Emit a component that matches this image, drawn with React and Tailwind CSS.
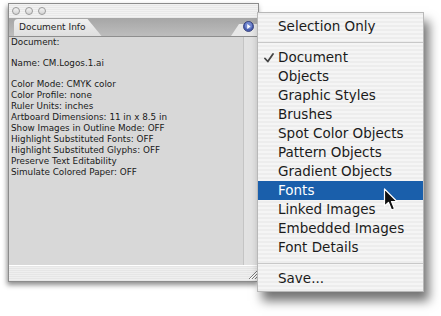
const infoLines = [
  'Document:',
  '',
  'Name: CM.Logos.1.ai',
  '',
  'Color Mode: CMYK color',
  'Color Profile: none',
  'Ruler Units: inches',
  'Artboard Dimensions: 11 in x 8.5 in',
  'Show Images in Outline Mode: OFF',
  'Highlight Substituted Fonts: OFF',
  'Highlight Substituted Glyphs: OFF',
  'Preserve Text Editability',
  'Simulate Colored Paper: OFF',
];

const menuGroups = [
  [{ label: 'Selection Only' }],
  [
    { label: 'Document', checked: true },
    { label: 'Objects' },
    { label: 'Graphic Styles' },
    { label: 'Brushes' },
    { label: 'Spot Color Objects' },
    { label: 'Pattern Objects' },
    { label: 'Gradient Objects' },
    { label: 'Fonts', active: true },
    { label: 'Linked Images' },
    { label: 'Embedded Images' },
    { label: 'Font Details' },
  ],
  [{ label: 'Save...' }],
];

function TrafficDot() {
  return <div className="w-[8px] h-[8px] rounded-full border border-[#9a9a9a] bg-gradient-to-b from-[#f4f4f4] to-[#d4d4d4]" />;
}

function MenuItem({ item }) {
  return (
    <div
      className={`relative h-[19px] flex items-center pl-[20px] ${
        item.active ? 'bg-[#1a5fab] text-white' : 'text-[#1b1b1b]'
      }`}
    >
      {item.checked && (
        <svg className="absolute left-[6px] top-[5px]" width="10" height="10" viewBox="0 0 10 10">
          <path d="M1 5.5 L3.8 8.5 L9 1" fill="none" stroke="#444" strokeWidth="1.8" strokeLinecap="round" strokeLinejoin="round" />
        </svg>
      )}
      {item.label}
    </div>
  );
}

export default function App() {
  return (
    <div className="relative w-[441px] h-[316px] bg-white overflow-hidden" style={{ fontFamily: '"DejaVu Sans", sans-serif' }}>
      {/* Document Info palette */}
      <div className="absolute left-[8px] top-[3px] w-[251px] h-[279px] flex flex-col border border-[#8c8c8c] bg-[#d8d8d8] shadow-[-1px_3px_5px_rgba(0,0,0,0.45)]">
        {/* title bar */}
        <div className="h-[14px] flex items-center gap-[5px] pl-[3px] bg-[repeating-linear-gradient(0deg,#e9e9e9_0px,#e9e9e9_1px,#f2f2f2_1px,#f2f2f2_2px)]">
          <TrafficDot />
          <TrafficDot />
          <TrafficDot />
        </div>

        {/* tab row */}
        <div className="relative h-[19px] flex items-end bg-gradient-to-b from-[#a6a6a6] to-[#bdbdbd] border-b border-[#8e8e8e]">
          <div className="ml-[5px] h-[17px] pl-[5px] pr-[16px] flex items-center bg-gradient-to-b from-[#f0f0f0] to-[#dedede] rounded-tl-[4px] [clip-path:polygon(0_0,calc(100%-14px)_0,100%_100%,0_100%)] text-[9px] text-[#1e1e1e]">
            Document Info
          </div>
          <div className="ml-auto mr-[-1px] h-[12px] w-[28px] bg-[#e8e8e8] [clip-path:polygon(8px_0,100%_0,100%_100%,0_100%)]" />
          <svg className="absolute right-[4px] top-[3px]" width="11" height="11" viewBox="0 0 11 11">
            <circle cx="5.5" cy="5.5" r="5" fill="#4a5fb0" stroke="#2a3470" strokeWidth="0.8" />
            <circle cx="5.5" cy="4.5" r="3.5" fill="#8fa3e6" opacity="0.6" />
            <path d="M4.2 3 L7.6 5.5 L4.2 8 Z" fill="#fff" />
          </svg>
        </div>

        {/* info text */}
        <div className="flex-1 flex">
          <div className="flex-1 pl-[2px] text-[8.8px] leading-[11px] text-[#1a1a1a] border-r border-[#c4c4c4]">
            {infoLines.map((line, i) =>
              line ? <div key={i}>{line}</div> : <div key={i} className="h-[10px]" />
            )}
          </div>
          <div className="w-[14px] bg-[#e2e2e2]" />
        </div>

        {/* footer */}
        <div className="h-[16px] flex justify-end items-end border-t border-white bg-[repeating-linear-gradient(0deg,#e6e6e6_0px,#e6e6e6_1px,#efefef_1px,#efefef_2px)]">
          <svg width="12" height="12" viewBox="0 0 12 12" className="mb-[1px]">
            <path d="M11 3 L3 11 M11 6 L6 11 M11 9 L9 11" stroke="#7a7a7a" strokeWidth="1" />
            <path d="M11 4 L4 11 M11 7 L7 11" stroke="#ffffff" strokeWidth="1" />
          </svg>
        </div>
      </div>

      {/* flyout menu */}
      <div className="absolute left-[257px] top-[12px] w-[167px] flex flex-col pt-[4px] pb-[3px] border border-[#b8b8b8] bg-[repeating-linear-gradient(0deg,#ededed_0px,#ededed_2px,#f5f5f5_2px,#f5f5f5_4px)] shadow-[5px_9px_10px_rgba(0,0,0,0.55)] text-[13.5px]">
        {menuGroups.map((group, gi) => (
          <div key={gi}>
            {gi > 0 && (
              <div className="h-[12px] flex items-center">
                <div className="w-full h-px bg-[#c8c8c8]" />
              </div>
            )}
            {group.map((item) => (
              <MenuItem key={item.label} item={item} />
            ))}
          </div>
        ))}
      </div>

      {/* mouse pointer */}
      <svg className="absolute left-[383px] top-[188px]" width="16" height="26" viewBox="0 0 16 26">
        <path d="M1.5 1 L1.5 18 L5.5 14.5 L8.5 22 L11.5 20.8 L8.5 13.5 L14 13.5 Z" fill="#111" stroke="#fff" strokeWidth="1.2" strokeLinejoin="round" />
      </svg>
    </div>
  );
}
